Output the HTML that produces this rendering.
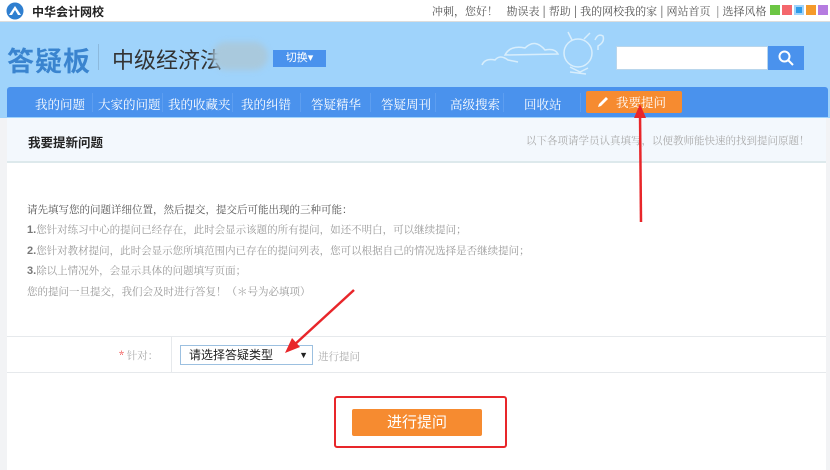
<!DOCTYPE html>
<html><head><meta charset="utf-8">
<style>
*{margin:0;padding:0;box-sizing:border-box}
body{width:830px;height:470px;overflow:hidden;background:#f2f3f5;font-family:"Liberation Sans","Noto Sans CJK SC",sans-serif;position:relative}
.abs{position:absolute}
.top{left:0;top:0;width:830px;height:22px;background:#fff;border-bottom:1px solid #ddd}
.hdr{left:0;top:22px;width:830px;height:96px;background:#9fd3fb}
.nav{left:7px;top:87px;width:821px;height:30px;background:#4a92ed;border-radius:3px 3px 0 0}
.nav span{position:absolute;top:8px;color:#fff;font-family:"Noto Serif CJK SC",serif;font-size:12.5px}
.sep{position:absolute;top:6px;width:1px;height:19px;background:#5d9ef0}
.sub{left:7px;top:118px;width:819px;height:45px;background:#f3f8fd;border-bottom:2px solid #dde9ec}
.main{left:7px;top:163px;width:819px;height:307px;background:#fff}
.txt{font-family:"Noto Serif CJK SC",serif;font-size:10.5px;color:#999;left:27px}
.txt b{color:#777;font-family:"Liberation Sans",sans-serif;font-size:11px}
</style></head><body>
<div class="abs top"></div>
<svg class="abs" style="left:6px;top:2px" width="18" height="18"><circle cx="9" cy="9" r="8.5" fill="#2f7fd0"/><path d="M3 13 L9 4 L15 13Z" fill="#fff"/><path d="M6 13 L9 8 L12 13Z" fill="#2f7fd0"/></svg>
<div class="abs" style="left:32px;top:3px;font-size:12px;font-weight:bold;color:#222">中华会计网校</div>
<div class="abs" style="left:432px;top:3px;font-size:11px;color:#555;font-family:'Noto Serif CJK SC',serif;white-space:nowrap">冲刺，您好！ &nbsp; 勘误表 <b>|</b> 帮助 <b>|</b> 我的网校我的家 <b>|</b> 网站首页 &nbsp;| 选择风格</div>
<div class="abs" style="left:770px;top:5px;width:10px;height:10px;background:#6cc644"></div>
<div class="abs" style="left:782px;top:5px;width:10px;height:10px;background:#f4676c"></div>
<div class="abs" style="left:794px;top:5px;width:10px;height:10px;background:#2e9be8;border:2px solid #9fd3fb"></div>
<div class="abs" style="left:806px;top:5px;width:10px;height:10px;background:#f59a2a"></div>
<div class="abs" style="left:818px;top:5px;width:10px;height:10px;background:#b57be0"></div>
<div class="abs hdr"></div>
<div class="abs" style="left:7px;top:40px;font-size:27px;font-weight:bold;color:#3a84cf;letter-spacing:1px">答疑板</div>
<div class="abs" style="left:98px;top:44px;width:1px;height:26px;background:#8cb9dd"></div>
<div class="abs" style="left:112px;top:43px;font-size:22px;color:#333">中级经济法</div>
<div class="abs" style="left:212px;top:42px;width:56px;height:28px;background:#a9c9dd;border-radius:14px;filter:blur(3px)"></div>
<div class="abs" style="left:273px;top:50px;width:53px;height:17px;background:#4a92ed;color:#fff;font-size:11px;text-align:center;line-height:17px">切换▾</div>
<svg class="abs" style="left:480px;top:30px" width="130" height="55" fill="none" stroke="#d8eefc" stroke-width="1.5"><path d="M2 35 Q5 28 15 30 Q20 24 28 30 L38 32"/><path d="M25 25 Q30 15 45 18 Q55 8 65 20 Q75 18 78 24 Z"/><circle cx="98" cy="23" r="14"/><path d="M90 37 L100 42 L108 38 M90 42 L106 44"/><path d="M92 10 L88 2 M104 9 L110 3"/><path d="M115 10 Q118 3 123 6 Q125 12 118 16 L118 20"/></svg>
<div class="abs" style="left:616px;top:46px;width:152px;height:24px;background:#fff;border:1px solid #b9d6ec"></div>
<div class="abs" style="left:768px;top:46px;width:36px;height:24px;background:#4a92ed"></div>
<svg class="abs" style="left:777px;top:49px" width="18" height="18" fill="none" stroke="#fff" stroke-width="2"><circle cx="7.5" cy="7.5" r="5"/><path d="M11 11 L16 16"/></svg>
<div class="abs nav">
<span style="left:28px">我的问题</span><div class="sep" style="left:85px"></div>
<span style="left:91px">大家的问题</span><div class="sep" style="left:155px"></div>
<span style="left:161px">我的收藏夹</span><div class="sep" style="left:225px"></div>
<span style="left:234px">我的纠错</span><div class="sep" style="left:293px"></div>
<span style="left:304px">答疑精华</span><div class="sep" style="left:363px"></div>
<span style="left:374px">答疑周刊</span><div class="sep" style="left:428px"></div>
<span style="left:443px">高级搜索</span><div class="sep" style="left:496px"></div>
<span style="left:517px">回收站</span><div class="sep" style="left:573px"></div>
</div>
<div class="abs" style="left:586px;top:91px;width:96px;height:22px;background:#f68b30;border-radius:2px;color:#fff;font-size:12.5px;line-height:22px;font-family:'Noto Serif CJK SC',serif;padding-left:30px">我要提问</div>
<svg class="abs" style="left:596px;top:95px" width="14" height="14"><path d="M2 12 L3 9 L10 2 L12 4 L5 11Z" fill="#fff"/></svg>
<div class="abs sub"></div>
<div class="abs" style="left:28px;top:132px;font-size:12.5px;font-weight:bold;color:#222">我要提新问题</div>
<div class="abs" style="left:526px;top:133px;font-size:10.5px;color:#aaa;font-family:'Noto Serif CJK SC',serif">以下各项请学员认真填写，以便教师能快速的找到提问原题！</div>
<div class="abs main"></div>
<div class="abs txt" style="top:202px;color:#555">请先填写您的问题详细位置，然后提交，提交后可能出现的三种可能：</div>
<div class="abs txt" style="top:222px"><b>1.</b>您针对练习中心的提问已经存在，此时会显示该题的所有提问，如还不明白，可以继续提问；</div>
<div class="abs txt" style="top:243px"><b>2.</b>您针对教材提问，此时会显示您所填范围内已存在的提问列表，您可以根据自己的情况选择是否继续提问；</div>
<div class="abs txt" style="top:263px"><b>3.</b>除以上情况外，会显示具体的问题填写页面；</div>
<div class="abs txt" style="top:284px">您的提问一旦提交，我们会及时进行答复！（＊号为必填项）</div>
<div class="abs" style="left:7px;top:336px;width:819px;height:37px;border-top:1px solid #e6e9ec;border-bottom:1px solid #e6e9ec"></div>
<div class="abs" style="left:171px;top:337px;width:1px;height:35px;background:#e6e9ec"></div>
<div class="abs" style="left:119px;top:348px;font-size:10.5px;color:#aaa;font-family:'Noto Serif CJK SC',serif"><span style="color:#e33">*</span> 针对：</div>
<div class="abs" style="left:180px;top:345px;width:133px;height:20px;border:1px solid #9cc0e0;font-size:12px;color:#222;line-height:18px;padding-left:8px">请选择答疑类型<span style="position:absolute;right:4px;font-size:9px">▼</span></div>
<div class="abs" style="left:318px;top:349px;font-size:10.5px;color:#aaa;font-family:'Noto Serif CJK SC',serif">进行提问</div>
<div class="abs" style="left:334px;top:396px;width:173px;height:52px;border:2px solid #e8262a;border-radius:3px"></div>
<div class="abs" style="left:352px;top:409px;width:130px;height:27px;background:#f68b30;border-radius:2px;color:#fff;font-size:15px;text-align:center;line-height:27px">进行提问</div>
<svg class="abs" style="left:0;top:0" width="830" height="470"><path d="M641 222 L640 112" stroke="#e8262a" stroke-width="2.5"/><path d="M634 118 L640 104 L646 118Z" fill="#e8262a"/>
<path d="M354 290 L293 346" stroke="#e8262a" stroke-width="2.5"/><path d="M285 353 L292 338 L300 347Z" fill="#e8262a"/></svg>
</body></html>
